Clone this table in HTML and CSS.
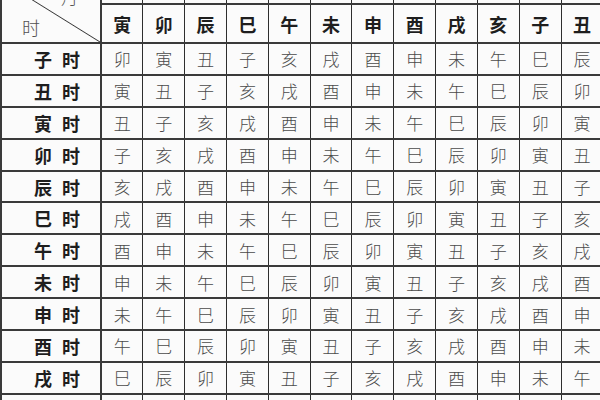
FILE: index.html
```html
<!DOCTYPE html>
<html lang="zh">
<head>
<meta charset="utf-8">
<link rel="stylesheet" href="styles.css">
</head>
<body>
<table class="grid">
  <colgroup>
    <col class="c-first">
    <col class="c"><col class="c"><col class="c"><col class="c"><col class="c"><col class="c">
    <col class="c"><col class="c"><col class="c"><col class="c"><col class="c"><col class="c">
  </colgroup>
  <tr class="r-top">
    <td class="corner" rowspan="2">
      <div class="corner-box">
        <span class="lab-month">月</span>
        <span class="lab-hour">时</span>
      </div>
    </td>
    <td></td><td></td><td></td><td></td><td></td><td></td>
    <td></td><td></td><td></td><td></td><td></td><td></td>
  </tr>
  <tr class="r-head">
    <th>寅</th><th>卯</th><th>辰</th><th>巳</th><th>午</th><th>未</th><th>申</th><th>酉</th><th>戌</th><th>亥</th><th>子</th><th>丑</th>
  </tr>
  <tr class="r"><th class="hr">子时</th><td>卯</td><td>寅</td><td>丑</td><td>子</td><td>亥</td><td>戌</td><td>酉</td><td>申</td><td>未</td><td>午</td><td>巳</td><td>辰</td></tr>
  <tr class="r"><th class="hr">丑时</th><td>寅</td><td>丑</td><td>子</td><td>亥</td><td>戌</td><td>酉</td><td>申</td><td>未</td><td>午</td><td>巳</td><td>辰</td><td>卯</td></tr>
  <tr class="r"><th class="hr">寅时</th><td>丑</td><td>子</td><td>亥</td><td>戌</td><td>酉</td><td>申</td><td>未</td><td>午</td><td>巳</td><td>辰</td><td>卯</td><td>寅</td></tr>
  <tr class="r"><th class="hr">卯时</th><td>子</td><td>亥</td><td>戌</td><td>酉</td><td>申</td><td>未</td><td>午</td><td>巳</td><td>辰</td><td>卯</td><td>寅</td><td>丑</td></tr>
  <tr class="r"><th class="hr">辰时</th><td>亥</td><td>戌</td><td>酉</td><td>申</td><td>未</td><td>午</td><td>巳</td><td>辰</td><td>卯</td><td>寅</td><td>丑</td><td>子</td></tr>
  <tr class="r"><th class="hr">巳时</th><td>戌</td><td>酉</td><td>申</td><td>未</td><td>午</td><td>巳</td><td>辰</td><td>卯</td><td>寅</td><td>丑</td><td>子</td><td>亥</td></tr>
  <tr class="r"><th class="hr">午时</th><td>酉</td><td>申</td><td>未</td><td>午</td><td>巳</td><td>辰</td><td>卯</td><td>寅</td><td>丑</td><td>子</td><td>亥</td><td>戌</td></tr>
  <tr class="r"><th class="hr">未时</th><td>申</td><td>未</td><td>午</td><td>巳</td><td>辰</td><td>卯</td><td>寅</td><td>丑</td><td>子</td><td>亥</td><td>戌</td><td>酉</td></tr>
  <tr class="r"><th class="hr">申时</th><td>未</td><td>午</td><td>巳</td><td>辰</td><td>卯</td><td>寅</td><td>丑</td><td>子</td><td>亥</td><td>戌</td><td>酉</td><td>申</td></tr>
  <tr class="r"><th class="hr">酉时</th><td>午</td><td>巳</td><td>辰</td><td>卯</td><td>寅</td><td>丑</td><td>子</td><td>亥</td><td>戌</td><td>酉</td><td>申</td><td>未</td></tr>
  <tr class="r"><th class="hr">戌时</th><td>巳</td><td>辰</td><td>卯</td><td>寅</td><td>丑</td><td>子</td><td>亥</td><td>戌</td><td>酉</td><td>申</td><td>未</td><td>午</td></tr>
  <tr class="r"><th class="hr">亥时</th><td>辰</td><td>卯</td><td>寅</td><td>丑</td><td>子</td><td>亥</td><td>戌</td><td>酉</td><td>申</td><td>未</td><td>午</td><td>巳</td></tr>
</table>
</body>
</html>
```

FILE: styles.css
```css
html, body {
  margin: 0;
  padding: 0;
  background: #fbfbfb;
  overflow: hidden;
  width: 600px;
  height: 400px;
}

.grid {
  table-layout: fixed;
  border-collapse: collapse;
  width: 602px;
  margin-top: -21px;
  margin-left: 0;
  font-family: "Noto Sans CJK SC", sans-serif;
}

.c-first { width: 100px; }
.c { width: 41.83px; }

.grid td, .grid th {
  padding: 0;
  text-align: center;
  vertical-align: middle;
  border-left: 1px solid #2e2e2e;
  border-right: 1px solid #2e2e2e;
  border-top: 2px solid #3a3a3a;
  border-bottom: 2px solid #3a3a3a;
  line-height: 1;
}

.grid tr > :first-child {
  border-left: 2px solid #3a3a3a;
}

.r-top { height: 24px; }
.r-head { height: 39px; }
.r { height: 31.9px; }

.grid .corner {
  border-right: 2px solid #3a3a3a;
  background: linear-gradient(to bottom left,
    transparent calc(50% - 0.9px),
    #3a3a3a 50%,
    transparent calc(50% + 0.9px));
}

.corner-box {
  position: relative;
  height: 61px;
}

.lab-month {
  position: absolute;
  left: 59px;
  top: 7px;
  font-size: 17px;
  font-weight: 300;
  color: #555;
}

.lab-hour {
  position: absolute;
  left: 20px;
  top: 37px;
  font-size: 18px;
  font-weight: 300;
  color: #505050;
}

.r-head th {
  font-size: 18px;
  font-weight: 700;
  color: #1e1e1e;
}

.grid .hr {
  font-size: 18px;
  font-weight: 700;
  color: #1e1e1e;
  text-align: left;
  padding-left: 32px;
  letter-spacing: 10px;
  border-right: 2px solid #3a3a3a;
}

.r td {
  font-size: 17px;
  font-weight: 300;
  color: #4a4a4a;
}
```
